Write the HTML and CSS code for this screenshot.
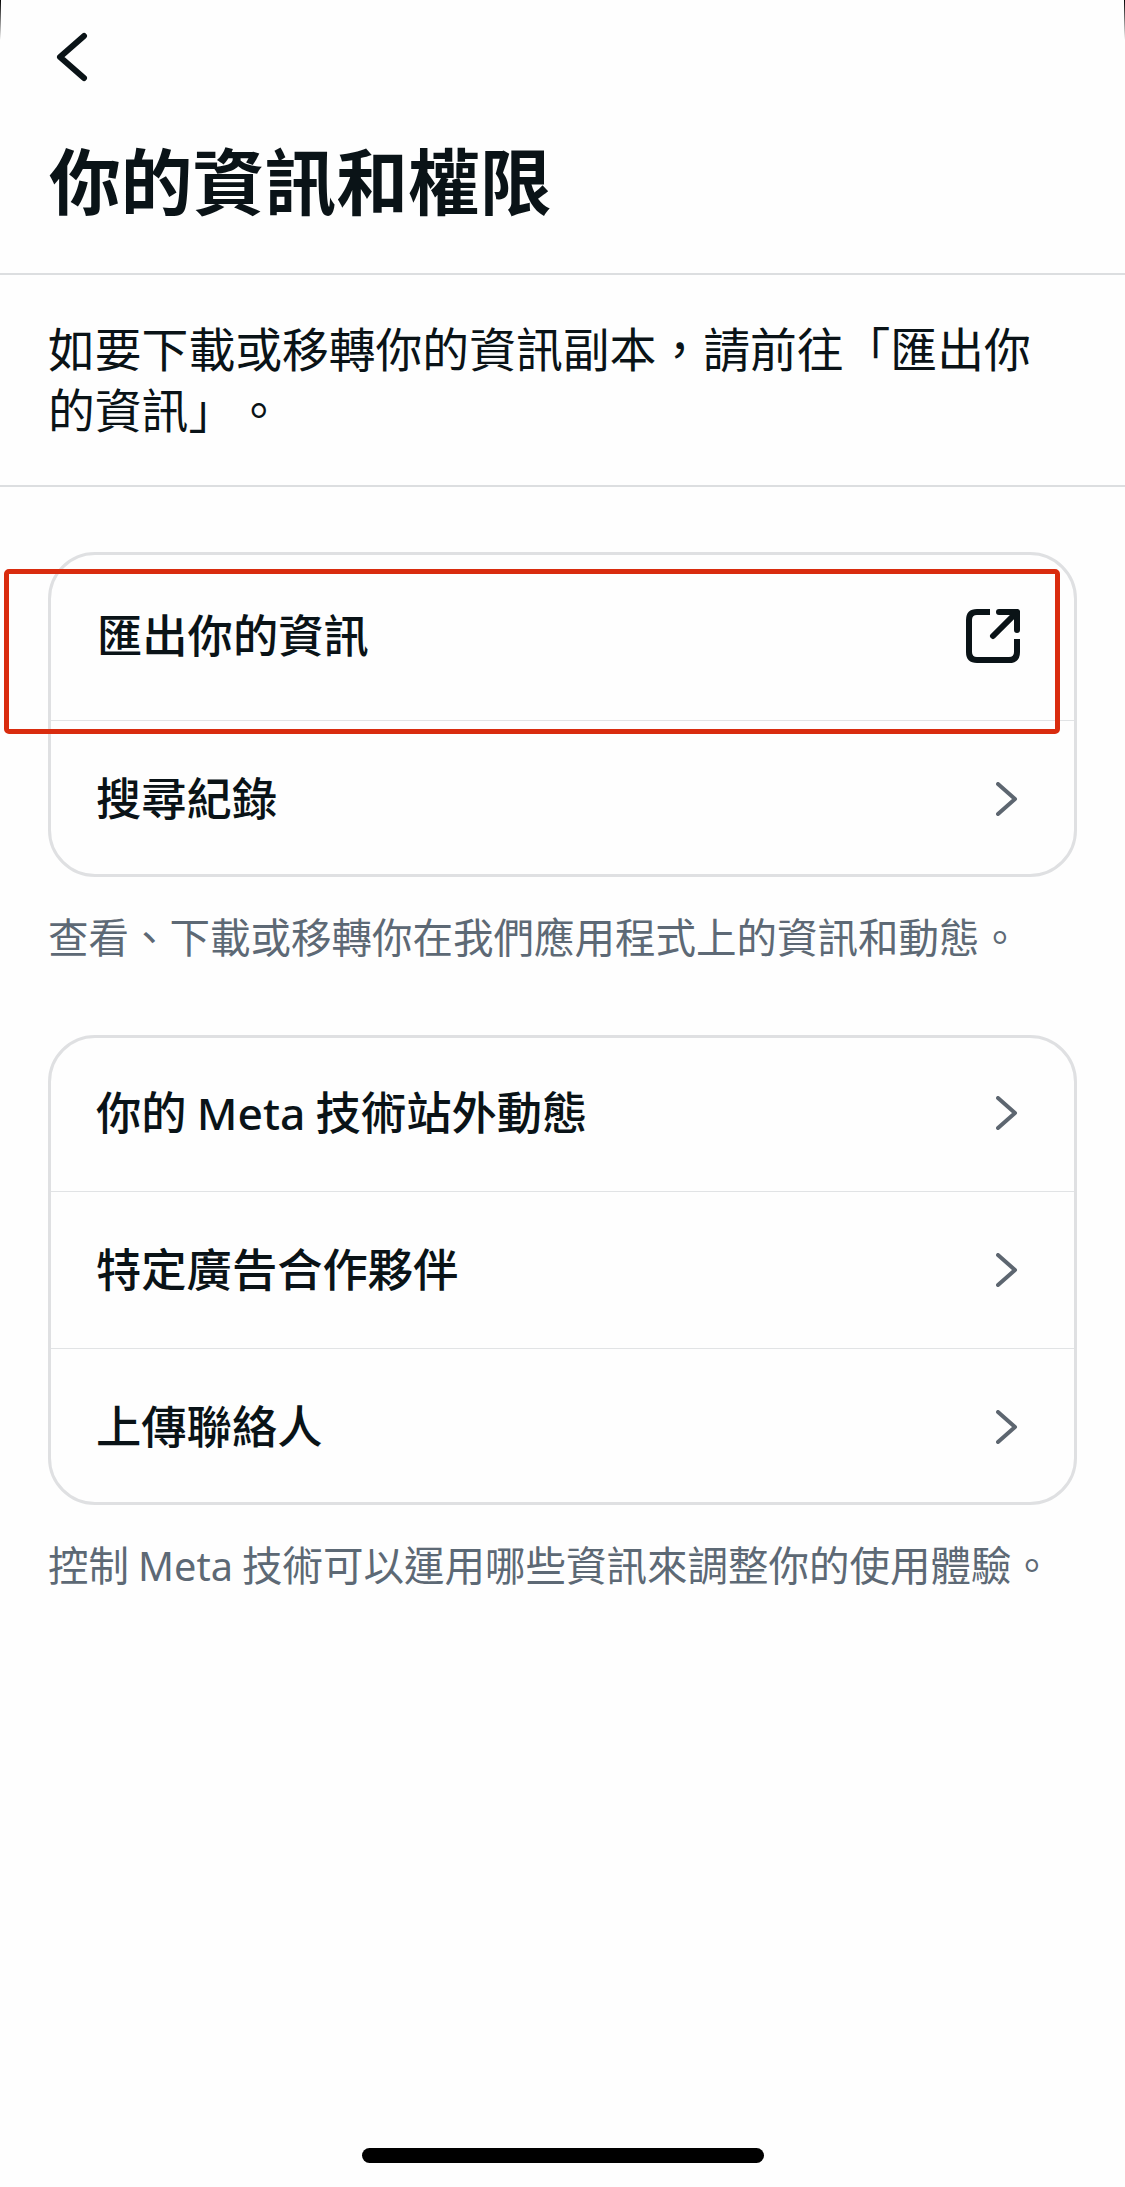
FILE: index.html
```html
<!DOCTYPE html>
<html lang="zh-Hant">
<head>
  <meta charset="UTF-8">
  <title>你的資訊和權限</title>
  <link rel="stylesheet" href="styles.css">
</head>
<body>
  <div class="screen">
    <header class="header">
      <svg class="back" viewBox="0 0 32 50">
        <path d="M28 4 L4 25 L28 46"/>
      </svg>
      <h1 class="title">你的資訊和權限</h1>
    </header>

    <p class="intro">如要下載或移轉你的資訊副本，請前往「匯出你的資訊」。</p>

    <main class="content">
      <div class="card">
        <div class="row row-export">
          <span class="label">匯出你的資訊</span>
          <svg class="external" viewBox="0 0 54 54">
            <path d="M24 3 H11 Q3 3 3 11 V43 Q3 51 11 51 H43 Q51 51 51 43 V30"/>
            <path class="arrow" d="M33 3 H51 V21 M51 3 L27 27"/>
          </svg>
        </div>
        <div class="row">
          <span class="label">搜尋紀錄</span>
          <svg class="chevron" viewBox="0 0 22 34"><path d="M2 2 L19 17 L2 32"/></svg>
        </div>
        <div class="highlight"></div>
      </div>
      <p class="caption">查看、下載或移轉你在我們應用程式上的資訊和動態。</p>

      <div class="card card-second">
        <div class="row">
          <span class="label">你的 <span class="latin">Meta</span> 技術站外動態</span>
          <svg class="chevron" viewBox="0 0 22 34"><path d="M2 2 L19 17 L2 32"/></svg>
        </div>
        <div class="row">
          <span class="label">特定廣告合作夥伴</span>
          <svg class="chevron" viewBox="0 0 22 34"><path d="M2 2 L19 17 L2 32"/></svg>
        </div>
        <div class="row">
          <span class="label">上傳聯絡人</span>
          <svg class="chevron" viewBox="0 0 22 34"><path d="M2 2 L19 17 L2 32"/></svg>
        </div>
      </div>
      <p class="caption">控制 <span class="latin">Meta</span> 技術可以運用哪些資訊來調整你的使用體驗。</p>
    </main>

    <div class="home-bar"></div>
  </div>
</body>
</html>
```
FILE: styles.css
```css
* {
  box-sizing: border-box;
}

body {
  margin: 0;
  background-color: #fefefe;
  font-family: 'Noto Sans CJK TC', sans-serif;
  color: #0a1317;
  text-spacing-trim: space-all;
}

h1, p {
  margin: 0;
}

svg {
  display: block;
  flex: none;
  fill: none;
  stroke: currentColor;
  stroke-linecap: round;
  stroke-linejoin: round;
}

.screen {
  position: relative;
  display: flex;
  flex-direction: column;
  height: 2187px;
  overflow: hidden;
}

/* rounded screen corners */
.screen::before,
.screen::after {
  content: '';
  position: absolute;
  top: 0;
  left: 0;
  width: 1px;
  height: 40px;
  background: linear-gradient(#000, #fefefe);
}

.screen::after {
  left: auto;
  right: 0;
}

.header {
  height: 275px;
  padding: 32px 49px 0;
  border-bottom: 2px solid #dcdee0;
}

.back {
  width: 32px;
  height: 50px;
  margin-left: 7px;
  stroke-width: 6;
}

.title {
  margin-top: 54px;
  font-size: 71.8px;
  line-height: 84px;
  font-weight: 700;
}

.intro {
  height: 212px;
  padding: 41px 48px 0;
  border-bottom: 2px solid #dcdee0;
  font-size: 46.8px;
  line-height: 61px;
}

.content {
  padding: 65px 48px 0;
}

.card {
  position: relative;
  border: 3px solid #dfe0e2;
  border-radius: 47px;
}

.card-second {
  margin-top: 71px;
}

.row {
  display: flex;
  justify-content: space-between;
  align-items: center;
  height: 156px;
  padding: 0 54px 0 45px;
}

.row + .row {
  height: 157px;
  border-top: 1px solid #e1e3e5;
}

.row:first-child {
  height: 153px;
  padding-bottom: 3px;
}

.row:nth-last-child(1 of .row) {
  height: 154px;
  padding-top: 3px;
}

.row.row-export {
  height: 165px;
  padding-left: 46px;
}

.label {
  padding-bottom: 7px;
  font-size: 45.3px;
  line-height: 60px;
  font-weight: 500;
}

.latin {
  font-family: 'Noto Sans', sans-serif;
  font-size: 0.98em;
  line-height: 1;
}

.external {
  width: 54px;
  height: 54px;
  stroke-width: 6;
  stroke-linecap: butt;
}

.external .arrow {
  stroke-linecap: round;
}

.chevron {
  width: 22px;
  height: 34px;
  margin-right: 2px;
  color: #5d6670;
  stroke-width: 4;
}

.caption {
  margin-top: 31px;
  font-size: 40.5px;
  line-height: 56px;
  color: #5d6975;
  white-space: nowrap;
}

.highlight {
  position: absolute;
  top: 14px;
  left: -47px;
  width: 1056px;
  height: 165px;
  border: 5px solid #d92c0f;
  border-radius: 5px;
}

.home-bar {
  width: 402px;
  height: 15px;
  margin: auto auto 24px 362px;
  border-radius: 8px;
  background: #000;
}
```
